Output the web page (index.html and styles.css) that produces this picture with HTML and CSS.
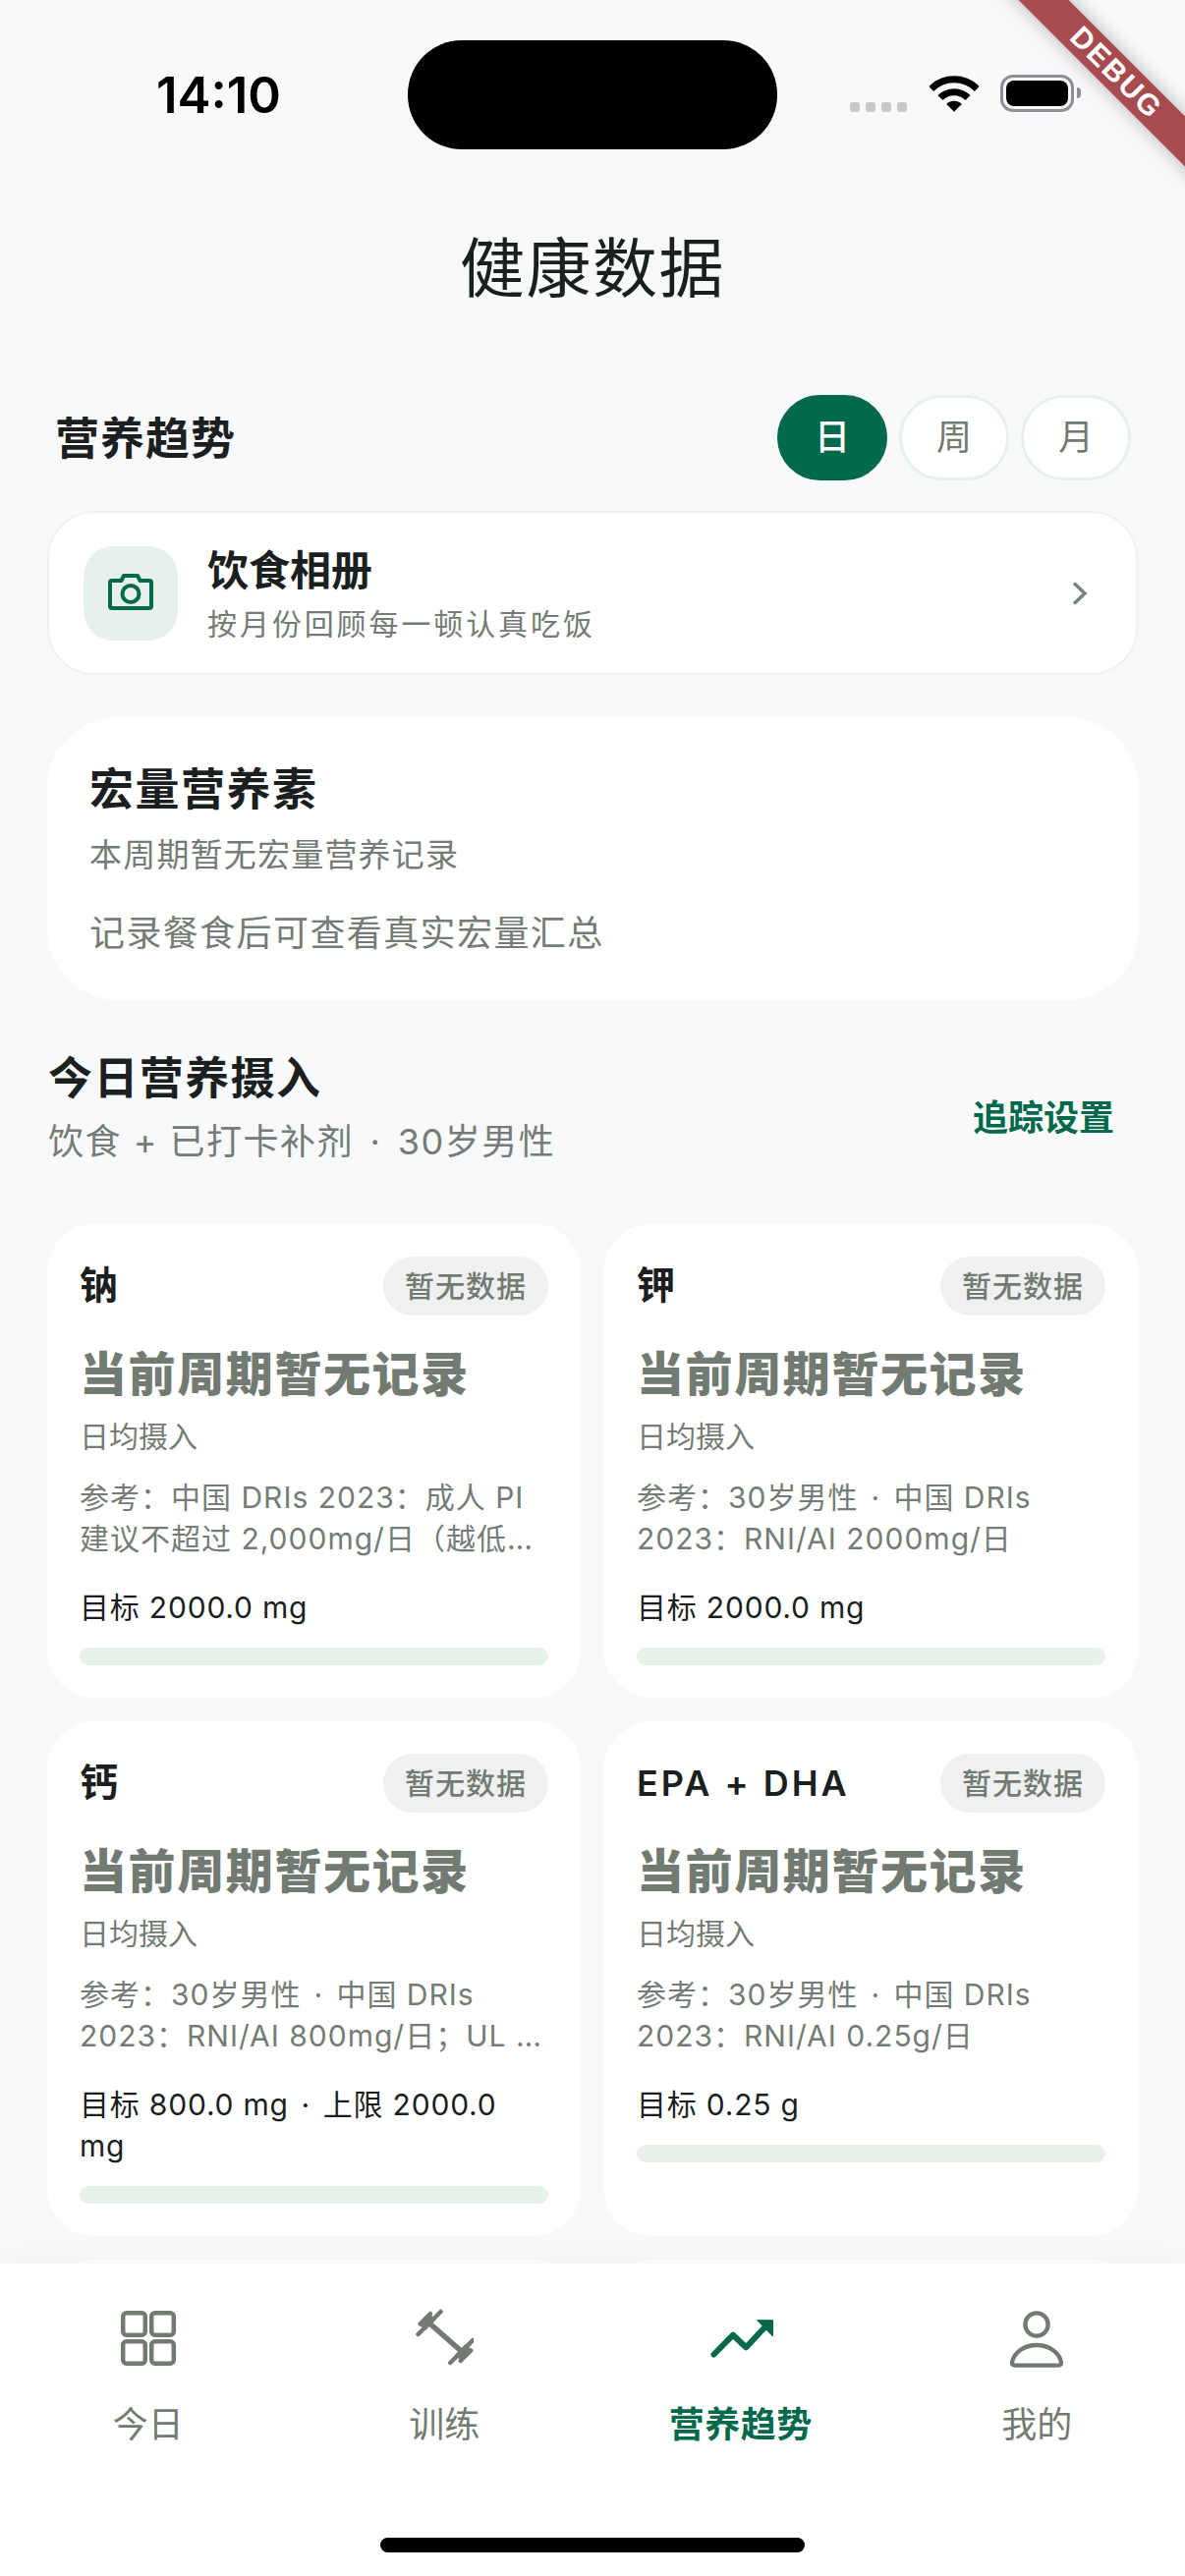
FILE: index.html
```html
<!DOCTYPE html>
<html lang="zh-CN">

<head>
  <meta charset="UTF-8" />
  <meta name="viewport" content="width=device-width, initial-scale=1.0" />
  <title>健康数据</title>
  <link rel="stylesheet" href="styles.css">
</head>

<body>
  <div class="screen">

    <div class="debug-banner">DEBUG</div>

    <div class="status-bar">
      <span class="time">14:10</span>
      <div class="island"></div>
      <div class="status-icons">
        <div class="signal"><i></i><i></i><i></i><i></i></div>
        <svg class="wifi" width="50" height="37" viewBox="0 0 50 37">
          <path d="M1.7 13.4A33 33 0 0 1 48.3 13.4" fill="none" stroke="#000" stroke-width="7" />
          <path d="M10.9 22.6A20 20 0 0 1 39.1 22.6" fill="none" stroke="#000" stroke-width="7" />
          <path d="M25 36.7L17.2 28.9A11 11 0 0 1 32.8 28.9Z" fill="#000" />
        </svg>
        <div class="battery"><div class="battery-fill"></div></div>
        <div class="battery-nub"></div>
      </div>
    </div>

    <h1 class="page-title">健康数据</h1>

    <main class="content">
      <div class="trend-head">
        <h2 class="trend-title">营养趋势</h2>
        <div class="chips">
          <span class="chip active">日</span>
          <span class="chip">周</span>
          <span class="chip">月</span>
        </div>
      </div>

      <div class="album-card">
        <div class="album-icon">
          <svg width="48" height="48" viewBox="0 0 48 48" fill="none" stroke="#02694b" stroke-width="4" stroke-linejoin="round">
            <path d="M5 11H14.5L17 6H31L33.5 11H43A2 2 0 0 1 45 13V37A2 2 0 0 1 43 39H5A2 2 0 0 1 3 37V13A2 2 0 0 1 5 11Z" />
            <circle cx="24" cy="24.5" r="8.5" />
          </svg>
        </div>
        <div class="album-text">
          <div class="album-title">饮食相册</div>
          <div class="album-sub">按月份回顾每一顿认真吃饭</div>
        </div>
        <svg class="chevron" width="16" height="24" viewBox="0 0 16 24" fill="none" stroke="#75857b" stroke-width="3.5">
          <path d="M2 1.5L13 12L2 22.5" />
        </svg>
      </div>

      <div class="macro-card">
        <div class="macro-title">宏量营养素</div>
        <div class="macro-sub">本周期暂无宏量营养记录</div>
        <div class="macro-note">记录餐食后可查看真实宏量汇总</div>
      </div>

      <div class="intake-head">
        <div class="intake-text">
          <div class="intake-title">今日营养摄入</div>
          <div class="intake-sub">饮食 + 已打卡补剂 &#8202;·&#8202; 30岁男性</div>
        </div>
        <a class="intake-link">追踪设置</a>
      </div>

      <div class="cards">
        <div class="card">
          <div class="card-head"><span class="card-name">钠</span><span class="badge">暂无数据</span></div>
          <div class="card-value">当前周期暂无记录</div>
          <div class="card-label">日均摄入</div>
          <div class="card-ref">参考：中国 DRIs 2023：成人 PI 建议不超过 2,000mg/日（越低…</div>
          <div class="card-target">目标 2000.0 mg</div>
          <div class="bar"></div>
        </div>
        <div class="card">
          <div class="card-head"><span class="card-name">钾</span><span class="badge">暂无数据</span></div>
          <div class="card-value">当前周期暂无记录</div>
          <div class="card-label">日均摄入</div>
          <div class="card-ref">参考：30岁男性 &#8202;·&#8202; 中国 DRIs 2023：RNI/AI 2000mg/日</div>
          <div class="card-target">目标 2000.0 mg</div>
          <div class="bar"></div>
        </div>
        <div class="card">
          <div class="card-head"><span class="card-name">钙</span><span class="badge">暂无数据</span></div>
          <div class="card-value">当前周期暂无记录</div>
          <div class="card-label">日均摄入</div>
          <div class="card-ref">参考：30岁男性 &#8202;·&#8202; 中国 DRIs 2023：RNI/AI 800mg/日；UL …</div>
          <div class="card-target">目标 800.0 mg &#8202;·&#8202; 上限 2000.0 mg</div>
          <div class="bar"></div>
        </div>
        <div class="card">
          <div class="card-head"><span class="card-name latin">EPA + DHA</span><span class="badge">暂无数据</span></div>
          <div class="card-value">当前周期暂无记录</div>
          <div class="card-label">日均摄入</div>
          <div class="card-ref">参考：30岁男性 &#8202;·&#8202; 中国 DRIs 2023：RNI/AI 0.25g/日</div>
          <div class="card-target">目标 0.25 g</div>
          <div class="bar"></div>
        </div>
        <div class="card card-next"></div>
        <div class="card card-next"></div>
      </div>
    </main>

    <nav class="tabbar">
      <div class="tabs">
        <div class="tab">
          <svg width="60" height="60" viewBox="0 0 60 60" fill="none" stroke="#727b72" stroke-width="4.5">
            <rect x="4.2" y="4.2" width="22.6" height="22.6" rx="3.5" />
            <rect x="33.2" y="4.2" width="22.6" height="22.6" rx="3.5" />
            <rect x="4.2" y="33.2" width="22.6" height="22.6" rx="3.5" />
            <rect x="33.2" y="33.2" width="22.6" height="22.6" rx="3.5" />
          </svg>
          <span class="tab-label">今日</span>
        </div>
        <div class="tab">
          <svg width="60" height="60" viewBox="0 0 60 60" fill="none" stroke="#727b72" stroke-linecap="round">
            <path d="M16 15.5L46.7 42.5" stroke-width="5.5" />
            <path d="M3.5 26L26.5 3" stroke-width="4.5" />
            <path d="M5.5 15.5L16 5" stroke-width="4.5" />
            <path d="M7.5 19L18.5 8" stroke-width="9" stroke-linecap="butt" />
            <path d="M59.2 32L36.2 55" stroke-width="4.5" />
            <path d="M57.2 42.5L46.7 53" stroke-width="4.5" />
            <path d="M55.2 39L44.2 50" stroke-width="9" stroke-linecap="butt" />
          </svg>
          <span class="tab-label">训练</span>
        </div>
        <div class="tab active">
          <svg width="60" height="60" viewBox="0 0 60 60" fill="none" overflow="visible">
            <path d="M2.5 46.5L22 26.7L35.3 39.3L56 17" stroke="#02694b" stroke-width="6" stroke-linecap="round" stroke-linejoin="round" />
            <path d="M46.5 11.7H62.5V28Z" fill="#02694b" stroke="#02694b" stroke-width="1" stroke-linejoin="round" />
          </svg>
          <span class="tab-label">营养趋势</span>
        </div>
        <div class="tab">
          <svg width="60" height="62" viewBox="0 0 60 62" fill="none" stroke="#727b72" stroke-width="4.5" stroke-linejoin="round">
            <circle cx="30" cy="16.5" r="12" />
            <path d="M7 59.5H53Q56 59.5 55.8 56.5C54 46 43 38.2 30 38.2C17 38.2 6 46 4.2 56.5Q4 59.5 7 59.5Z" />
          </svg>
          <span class="tab-label">我的</span>
        </div>
      </div>
      <div class="home-indicator"></div>
    </nav>

  </div>
</body>

</html>
```

FILE: styles.css
```css
* {
  box-sizing: border-box;
}
html, body {
  margin: 0;
  padding: 0;
}
body {
  font-family: Inter, "Noto Sans CJK SC", sans-serif;
  background: #f8f9fb;
  color: #1c1f1f;
}
.screen {
  position: relative;
  width: 1206px;
  height: 2622px;
  overflow: hidden;
  display: flex;
  flex-direction: column;
}

/* debug ribbon */
.debug-banner {
  position: absolute;
  left: 984px;
  top: 54px;
  width: 300px;
  height: 36px;
  transform: rotate(45deg);
  background: #a84b4f;
  box-shadow: 0 0 20px rgba(0, 0, 0, 0.28);
  color: #fff;
  font-family: "Liberation Sans", sans-serif;
  font-size: 30px;
  font-weight: 700;
  line-height: 36px;
  letter-spacing: 2px;
  text-align: center;
  text-indent: 6px;
  z-index: 5;
}

/* status bar */
.status-bar {
  height: 180px;
  flex: none;
  padding-top: 41px;
  display: flex;
  align-items: flex-start;
}
.time {
  width: 415px;
  padding: 30px 0 0 159px;
  font-size: 51px;
  font-weight: 600;
  line-height: 52px;
  color: #000;
}
.island {
  width: 376px;
  height: 111px;
  border-radius: 55px;
  background: #000;
}
.status-icons {
  margin-left: 74px;
  padding-top: 35px;
  display: flex;
  align-items: flex-start;
}
.signal {
  display: flex;
  gap: 6px;
  padding-top: 28px;
}
.signal i {
  width: 10px;
  height: 10px;
  border-radius: 3px;
  background: #c8c8cc;
}
.wifi {
  margin: 1px 0 0 23px;
}
.battery {
  width: 75px;
  height: 38px;
  margin-left: 22px;
  padding: 3px;
  border: 3px solid #8f8f93;
  border-radius: 13px;
}
.battery-fill {
  width: 100%;
  height: 100%;
  border-radius: 8px;
  background: #000;
}
.battery-nub {
  width: 4px;
  height: 11px;
  margin: 13px 0 0 3px;
  border-radius: 0 4px 4px 0;
  background: #8f8f93;
}

.page-title {
  height: 180px;
  flex: none;
  margin: 0;
  padding-top: 6px;
  font-size: 66px;
  font-weight: 400;
  letter-spacing: 1.5px;
  line-height: 174px;
  text-align: center;
}

.content {
  flex: 1;
  min-height: 0;
  overflow: hidden;
  padding: 42px 48px 0;
}

.trend-head {
  display: flex;
  justify-content: space-between;
  align-items: center;
  padding: 0 7px 0 8px;
}
.trend-title {
  margin: 2px 0 0;
  font-size: 45px;
  font-weight: 600;
  letter-spacing: 1px;
  line-height: 60px;
}
.chips {
  display: flex;
  gap: 12px;
}
.chip {
  width: 112px;
  height: 87px;
  border: 3px solid #e7f0e9;
  border-radius: 44px;
  background: #fff;
  color: #727b72;
  font-size: 36px;
  line-height: 81px;
  text-align: center;
}
.chip.active {
  border-color: #02694b;
  background: #02694b;
  color: #fff;
  font-weight: 500;
}

.album-card {
  height: 167px;
  margin-top: 31px;
  padding: 0 49px 0 35px;
  display: flex;
  align-items: center;
  border: 2px solid #f0f1f3;
  border-radius: 48px;
  background: #fff;
}
.album-icon {
  width: 96px;
  height: 96px;
  flex: none;
  display: flex;
  align-items: center;
  justify-content: center;
  border-radius: 30px;
  background: #e7f0eb;
}
.album-text {
  flex: 1;
  margin-left: 30px;
  padding-top: 3px;
}
.album-title {
  font-size: 42px;
  font-weight: 600;
  line-height: 54px;
}
.album-sub {
  margin-top: 6px;
  color: #737c75;
  font-size: 30px;
  letter-spacing: 2.9px;
  line-height: 42px;
}

.macro-card {
  height: 288px;
  margin-top: 43px;
  padding: 44px 43px 0;
  border-radius: 72px;
  background: #fff;
}
.macro-title {
  font-size: 45px;
  font-weight: 600;
  letter-spacing: 1.5px;
  line-height: 60px;
}
.macro-sub {
  margin-top: 15px;
  color: #737c75;
  font-size: 33px;
  letter-spacing: 1.2px;
  line-height: 42px;
}
.macro-note {
  margin-top: 35px;
  color: #737c75;
  font-size: 36px;
  line-height: 48px;
  letter-spacing: 1.4px;
}

.intake-head {
  margin-top: 53px;
  display: flex;
  justify-content: space-between;
  align-items: center;
  padding-right: 24px;
}
.intake-text {
  padding-left: 1px;
}
.intake-title {
  font-size: 45px;
  font-weight: 600;
  letter-spacing: 1.4px;
  line-height: 54px;
}
.intake-sub {
  margin-top: 13px;
  color: #737c75;
  font-size: 36px;
  line-height: 48px;
  letter-spacing: 1.5px;
}
.intake-link {
  margin-top: 12px;
  color: #02694b;
  font-size: 36px;
  font-weight: 600;
}

.cards {
  margin-top: 60px;
  display: grid;
  grid-template-columns: 1fr 1fr;
  gap: 24px;
}
.card {
  padding: 33px 33px 33px;
  border-radius: 48px;
  background: #fff;
}
.card-next {
  height: 300px;
}
.card-head {
  display: flex;
  justify-content: space-between;
  align-items: center;
  height: 60px;
}
.card-name {
  margin-bottom: 8px;
  font-size: 39px;
  font-weight: 600;
  letter-spacing: 1.6px;
}
.card-name.latin {
  margin-bottom: 0;
  font-size: 36px;
  letter-spacing: 3px;
}
.badge {
  width: 168px;
  height: 60px;
  border-radius: 30px;
  background: #eff1f0;
  color: #727b72;
  font-size: 30px;
  font-weight: 500;
  letter-spacing: 1px;
  line-height: 60px;
  text-align: center;
}
.card-value {
  margin-top: 30px;
  color: #727b72;
  font-size: 48px;
  font-weight: 900;
  letter-spacing: 1.6px;
  line-height: 60px;
}
.card-label {
  margin-top: 12px;
  color: #737c75;
  font-size: 30px;
  line-height: 42px;
}
.card-ref {
  margin-top: 20px;
  color: #737c75;
  font-size: 30px;
  letter-spacing: 1px;
  line-height: 42px;
}
.card-target {
  margin-top: 28px;
  font-size: 30px;
  letter-spacing: 0.8px;
  line-height: 42px;
}
.bar {
  height: 18px;
  margin-top: 20px;
  border-radius: 9px;
  background: #e7f0e9;
}

/* bottom navigation */
.tabbar {
  height: 318px;
  flex: none;
  padding-top: 46px;
  display: flex;
  flex-direction: column;
  align-items: center;
  background: #fff;
  box-shadow: 0 -6px 30px rgba(0, 0, 0, 0.03);
  z-index: 2;
}
.tabs {
  width: 100%;
  display: flex;
}
.tab {
  flex: 1;
  display: flex;
  flex-direction: column;
  align-items: center;
}
.tab svg {
  height: 60px;
}
.tab-label {
  margin-top: 34px;
  color: #727b72;
  font-size: 36px;
  line-height: 48px;
}
.tab.active .tab-label {
  color: #02694b;
  font-weight: 600;
  letter-spacing: 0.5px;
}
.home-indicator {
  width: 432px;
  height: 15px;
  margin-top: auto;
  margin-bottom: 24px;
  border-radius: 8px;
  background: #000;
}
```
